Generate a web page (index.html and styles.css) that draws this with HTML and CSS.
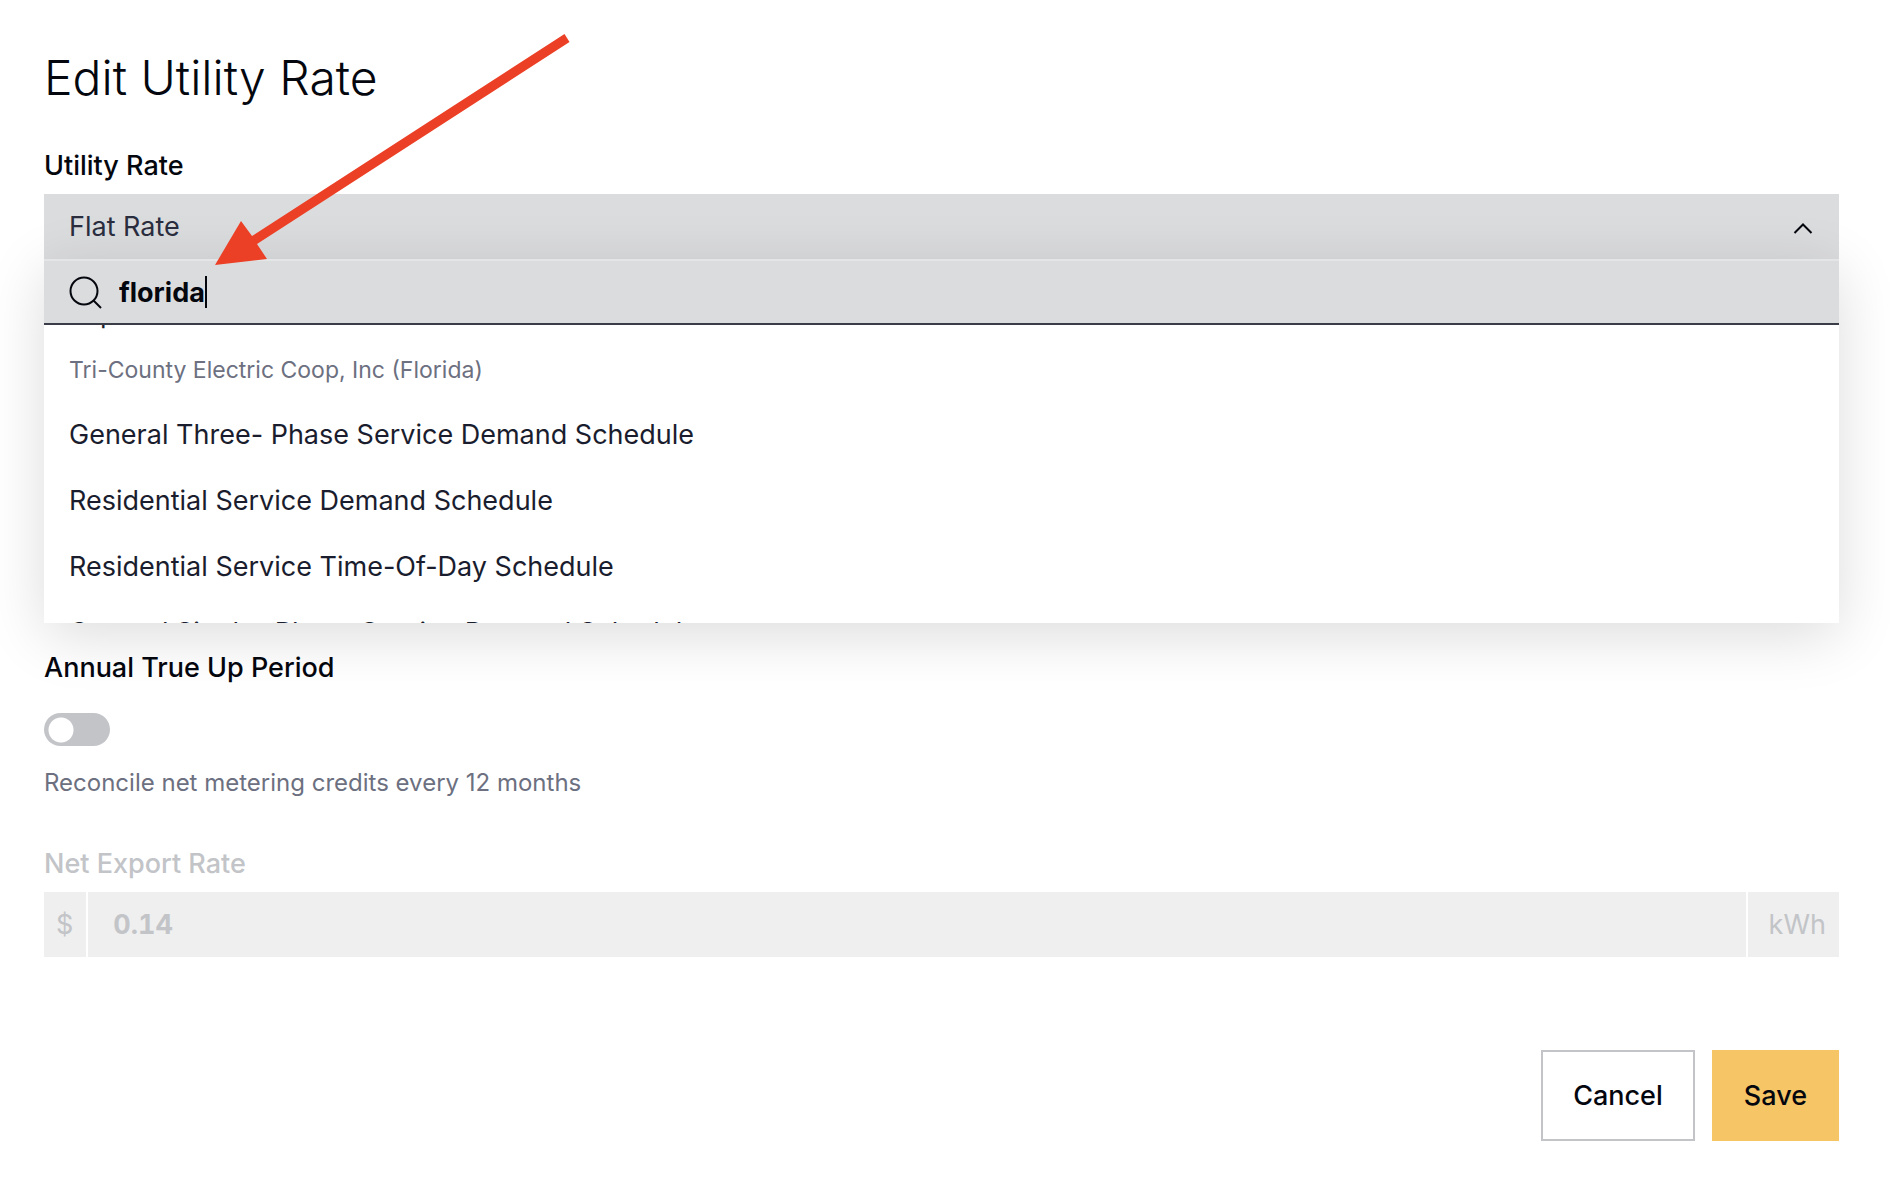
FILE: index.html
```html
<!DOCTYPE html>
<html lang="en">
<head>
  <meta charset="UTF-8">
  <title>Edit Utility Rate</title>
  <link rel="stylesheet" href="styles.css">
</head>
<body>

  <form class="page">
    <h1>Edit Utility Rate</h1>

    <label class="label" for="rateBtn">Utility Rate</label>
    <div class="dropdown">
      <button type="button" id="rateBtn" class="dropdown-btn" aria-haspopup="listbox" aria-expanded="true">
        <span>Flat Rate</span>
        <svg class="chevron" viewBox="0 0 20 14" aria-hidden="true"><path d="M1.500 13 10 4.500l8.500 8.500"/></svg>
      </button>

      <div class="menu">
        <label class="search">
          <svg class="search-icon" viewBox="0 0 34 34" aria-hidden="true">
            <circle cx="15" cy="16" r="13.500"/>
            <path d="M24.500 25.500 32 33"/>
          </svg>
          <input type="text" class="search-input" value="florida" aria-label="Search rates">
          <span class="caret"></span>
        </label>

        <ul id="rates" class="rates">
          <li class="rate">Experimental</li>
          <li class="group">Tri-County Electric Coop, Inc (Florida)</li>
          <li class="rate">General Three- Phase Service Demand Schedule</li>
          <li class="rate">Residential Service Demand Schedule</li>
          <li class="rate">Residential Service Time-Of-Day Schedule</li>
          <li class="rate">General Single- Phase Service Demand Schedule</li>
        </ul>
      </div>
    </div>

    <label class="label" for="trueUp">Annual True Up Period</label>
    <input type="checkbox" id="trueUp" class="toggle">
    <p class="hint">Reconcile net metering credits every 12 months</p>

    <label class="label disabled" for="exportRate">Net Export Rate</label>
    <div class="input-group">
      <span class="addon">$</span>
      <input type="text" id="exportRate" class="amount" value="0.14" disabled>
      <span class="addon unit">kWh</span>
    </div>

    <div class="actions">
      <button type="button" class="btn">Cancel</button>
      <button type="submit" class="btn btn-save">Save</button>
    </div>
  </form>

  <svg class="arrow" viewBox="0 0 360 236" aria-hidden="true">
    <path d="M349.500 2 354.500 10 42 212 52 227 0 233 26 189 37 204Z"/>
  </svg>

  <script>
    document.getElementById('rates').scrollTop = 44;
  </script>

</body>
</html>
```

FILE: styles.css
```css
* {
  box-sizing: border-box;
}

body {
  margin: 0;
  font-family: Inter, "Liberation Sans", sans-serif;
  font-size: 27px;
  color: #05070f;
  background: #fff;
}

button,
input {
  font: inherit;
  color: inherit;
}

.page {
  display: flex;
  flex-direction: column;
  padding: 48px 51px 36px 44px;
}

h1 {
  margin: 0 0 41px;
  font-size: 48px;
  font-weight: 300;
  line-height: 60px;
}

.label {
  font-weight: 500;
  line-height: 34px;
  margin-bottom: 11px;
}

.dropdown {
  margin-bottom: 28px;
}

.dropdown-btn {
  display: flex;
  align-items: center;
  justify-content: space-between;
  width: 100%;
  height: 65px;
  padding: 0 26px 0 25px;
  border: none;
  background: #dbdcde;
  color: #2a2e3f;
}

.chevron {
  width: 20px;
  height: 14px;
  fill: none;
  stroke: #05070f;
  stroke-width: 2;
}

.menu {
  position: relative;
  background: #fff;
  box-shadow: 0 12px 56px rgba(0, 0, 0, 0.14);
}

.search {
  display: flex;
  align-items: center;
  height: 66px;
  padding-left: 25px;
  border-top: 2px solid #e4e5e6;
  border-bottom: 2px solid #3a3c48;
  background: #dbdcde;
}

.search-icon {
  width: 34px;
  height: 34px;
  margin-right: 16px;
  fill: none;
  stroke: #05070f;
  stroke-width: 2;
}

.search-input {
  field-sizing: content;
  padding: 0;
  border: none;
  outline: none;
  background: none;
  font-weight: 700;
}

.caret {
  width: 2px;
  height: 32px;
  background: #05070f;
}

.rates {
  height: 298px;
  margin: 0;
  padding: 0;
  list-style: none;
  overflow-y: scroll;
  scrollbar-width: none;
}

.rate {
  padding: 0 25px;
  line-height: 66px;
  color: #1a1d2e;
}

.group {
  padding: 0 25px 9px;
  font-size: 23px;
  line-height: 46px;
  color: #6c7080;
}

.toggle {
  appearance: none;
  width: 66px;
  height: 33px;
  margin: 17px 0 20px;
  border-radius: 17px;
  background: radial-gradient(circle at 17px 17px, #fff 12px, #c2c4c8 13px);
}

.hint {
  margin: 0 0 47px;
  font-size: 24px;
  line-height: 34px;
  color: #6c7080;
}

.disabled {
  color: #c2c4c8;
}

.input-group {
  display: flex;
  gap: 2px;
  height: 65px;
  color: #c2c4c8;
}

.addon {
  display: flex;
  align-items: center;
  padding: 0 13px 0 12px;
  background: #efefef;
}

.unit {
  padding-left: 21px;
}

.amount {
  flex: 1;
  min-width: 0;
  padding: 0 25px;
  border: none;
  background: #efefef;
  font-weight: 700;
  font-variant-numeric: tabular-nums;
}

.actions {
  display: flex;
  justify-content: flex-end;
  gap: 17px;
  margin-top: 93px;
}

.btn {
  height: 91px;
  padding: 0 30px;
  border: 2px solid #c2c4c8;
  background: #fff;
  font-weight: 500;
}

.btn-save {
  border-color: #f6c566;
  background: #f6c566;
}

/* annotation drawn over the form */
.arrow {
  position: absolute;
  left: 215px;
  top: 32px;
  width: 360px;
  height: 236px;
  fill: #ec4026;
  pointer-events: none;
}
```
